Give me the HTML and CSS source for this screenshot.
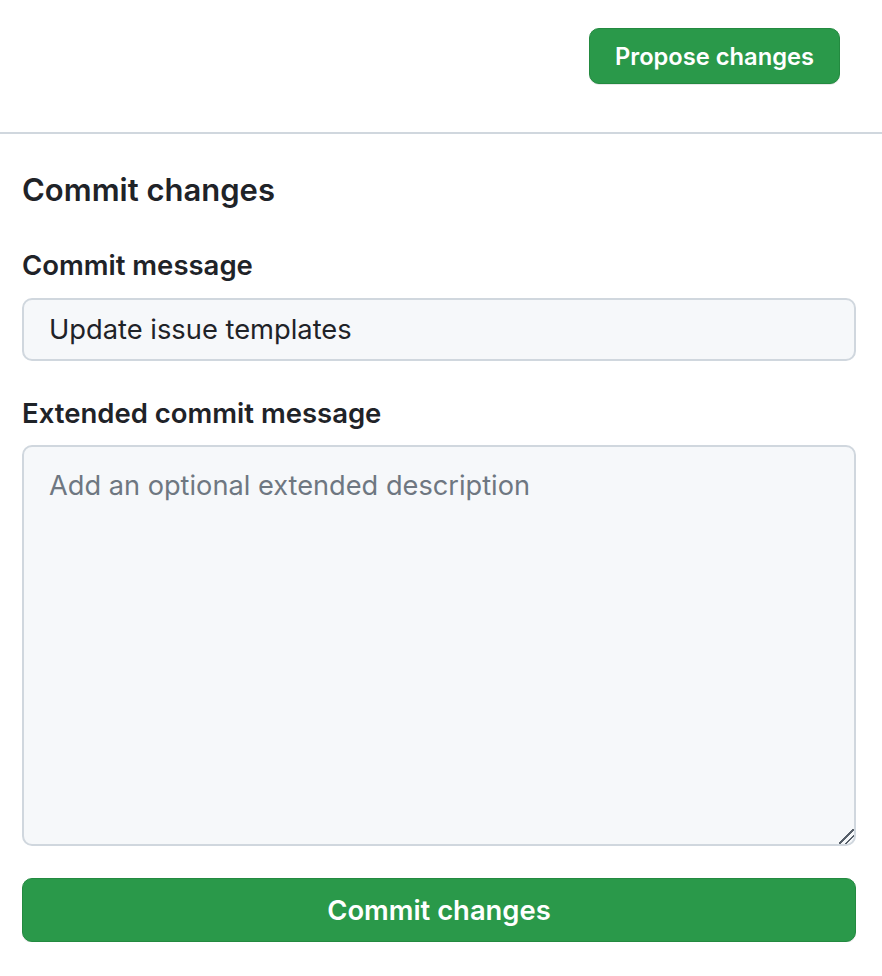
FILE: index.html
```html
<!DOCTYPE html>
<html lang="en">
<head>
<meta charset="utf-8">
<title>Commit changes</title>
<link rel="stylesheet" href="styles.css">
</head>
<body>
<div class="topbar">
  <button class="btn btn-primary btn-propose" type="button">Propose changes</button>
</div>
<form class="commit-form">
  <h2 class="commit-title">Commit changes</h2>
  <label class="field-label" for="msg">Commit message</label>
  <input class="form-input" id="msg" type="text" value="Update issue templates">
  <label class="field-label field-label-next" for="desc">Extended commit message</label>
  <textarea class="form-textarea" id="desc" placeholder="Add an optional extended description"></textarea>
  <button class="btn btn-primary btn-block" type="button">Commit changes</button>
</form>
</body>
</html>
```

FILE: styles.css
```css
* { box-sizing: border-box; }
html, body { margin: 0; padding: 0; background: #ffffff; }
body {
  font-family: Inter, "Liberation Sans", sans-serif;
  color: #1f2328;
  width: 882px;
}
.topbar {
  display: flex;
  justify-content: flex-end;
  align-items: flex-start;
  padding: 28px 42px 0 0;
  height: 134px;
  border-bottom: 2px solid #d0d7de;
}
.btn {
  font-family: inherit;
  font-weight: 600;
  border-radius: 10px;
  cursor: pointer;
}
.btn-primary {
  background: #2a994a;
  color: #ffffff;
  border: 1px solid #238a40;
  box-shadow: 0 1px 0 rgba(31, 35, 40, 0.1);
}
.btn-propose {
  height: 56px;
  padding: 0 25px;
  font-size: 23.7px;
}
.commit-form {
  display: flex;
  flex-direction: column;
  padding: 0 26px 0 22px;
}
.commit-title {
  margin: 36px 0 0;
  font-size: 31px;
  font-weight: 600;
  line-height: 40px;
}
.field-label {
  font-size: 27.5px;
  font-weight: 600;
  line-height: 34px;
  margin-top: 38px;
}
.field-label-next {
  margin-top: 35px;
}
.form-input {
  margin-top: 16px;
  height: 63px;
  flex: none;
  padding: 0 25px;
  font-family: inherit;
  font-size: 27.3px;
  color: #1f2328;
  background: #f6f8fa;
  border: 2px solid #d0d7de;
  border-radius: 10px;
  outline: none;
}
.form-textarea {
  margin-top: 15px;
  height: 401px;
  flex: none;
  padding: 19px 25px;
  font-family: inherit;
  font-size: 27.2px;
  line-height: 40px;
  color: #1f2328;
  background: #f6f8fa;
  border: 2px solid #d0d7de;
  border-radius: 10px;
  outline: none;
  resize: vertical;
}
.form-textarea::placeholder { color: #6e7781; }
.form-textarea::-webkit-resizer {
  background: linear-gradient(135deg,
    transparent 0, transparent 46%,
    #57606a 46%, #57606a 54%,
    transparent 54%, transparent 68%,
    #57606a 68%, #57606a 76%,
    transparent 76%);
}
.btn-block {
  margin-top: 32px;
  height: 64px;
  width: 100%;
  font-size: 27.4px;
}
```
